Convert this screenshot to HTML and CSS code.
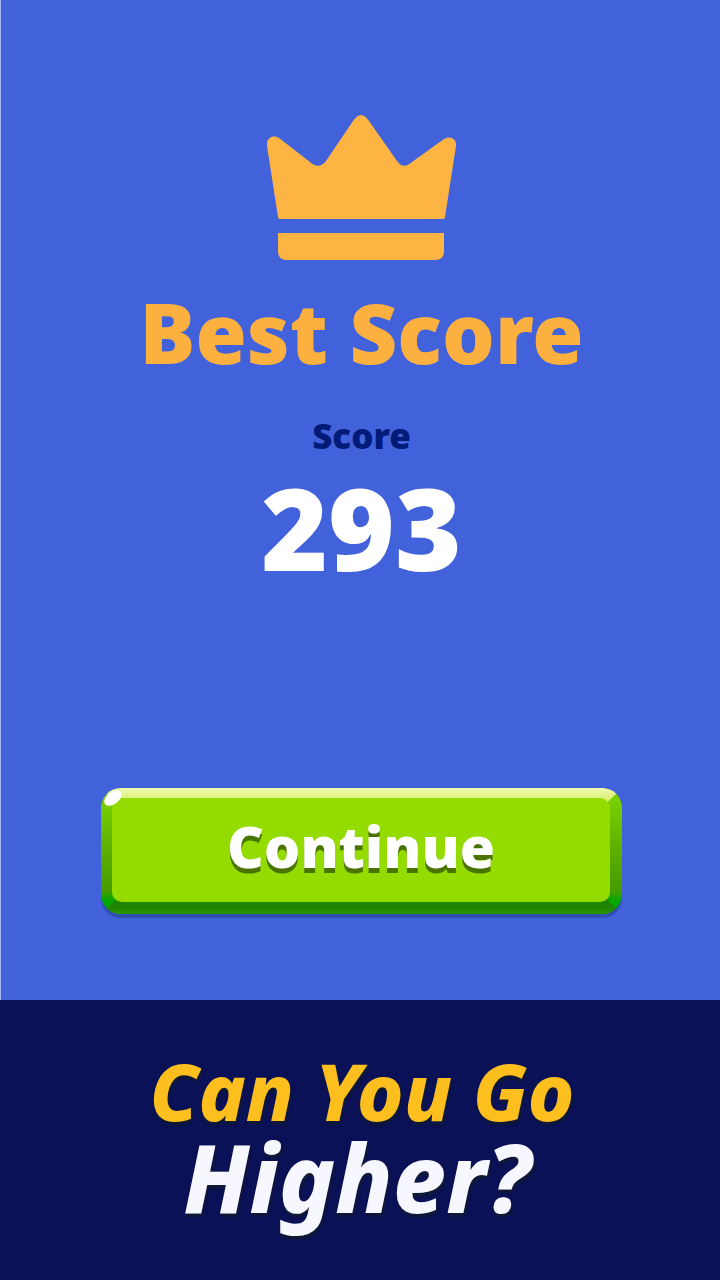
FILE: index.html
```html
<!DOCTYPE html>
<html lang="en">
<head>
<meta charset="utf-8">
<meta name="viewport" content="width=device-width, initial-scale=1">
<title>Best Score</title>
<link rel="stylesheet" href="styles.css">
</head>
<body>
<main class="result">
  <svg class="crown" viewBox="0 0 190 148" aria-hidden="true">
    <path d="M13 105 Q11 105 11 103 L0 32 C-1 24 6 20 12 24 L43 48 Q52 56 59 47 L86 7 Q94 -5 102 7 L130 47 Q136 56 145 48 L177 25 C183 21 190 25 189 32 L178 103 Q178 105 176 105 Z"/>
    <path d="M11 119 H177 V137 Q177 146 168 146 H20 Q11 146 11 137 Z"/>
  </svg>
  <h1 class="title">Best Score</h1>
  <p class="label">Score</p>
  <p class="value">293</p>
  <button class="continue" type="button">
    <span class="face">Continue</span>
    <svg class="shine" viewBox="0 0 20 18" aria-hidden="true"><ellipse cx="10" cy="9" rx="10" ry="6" transform="rotate(-38 10 9)"/></svg>
  </button>
</main>
<footer class="tagline">
  <p class="tagline-top">Can You Go</p>
  <p class="tagline-bottom">Higher?</p>
</footer>
</body>
</html>
```
FILE: styles.css
```css
* {
  box-sizing: border-box;
}

body {
  margin: 0;
  min-height: 100vh;
  display: flex;
  flex-direction: column;
  background: #0a1156;
  font-family: "Noto Sans", "Open Sans", sans-serif;
}

p,
h1 {
  margin: 0;
}

.result {
  flex: 1;
  display: flex;
  flex-direction: column;
  align-items: center;
  padding: 114px 16px 86px 18px;
  border-left: 1px solid #a9b9ee;
  background: #4262db;
}

.crown {
  width: 190px;
  height: 148px;
  fill: #fdb443;
}

.title {
  margin-top: 28px;
  font-size: 83px;
  font-weight: 900;
  line-height: 84px;
  color: #fbb040;
}

.label {
  margin-top: 44px;
  font-size: 35px;
  font-weight: 900;
  line-height: 36px;
  color: #001b78;
}

.value {
  margin-top: 14px;
  font-size: 114px;
  font-weight: 900;
  line-height: 118px;
  color: #fff;
}

.continue {
  position: relative;
  display: grid;
  width: 76%;
  height: 126px;
  margin-top: auto;
  padding: 10px 12px 12px 11px;
  border: 0;
  border-radius: 20px;
  background: linear-gradient(#79d000 10%, #5caf00 50%, #459b00 82%, #00a800 90%);
  box-shadow: 0 4px 0 #304fae;
  font-family: inherit;
  cursor: pointer;
}

.continue::before,
.continue::after {
  content: "";
  position: absolute;
  left: 0;
  right: 0;
  height: 20px;
}

.continue::before {
  top: 0;
  border-radius: 20px 20px 0 0;
  background: linear-gradient(#f0fbb0, #dcf27c 10px);
  clip-path: polygon(0 0, 100% 0, calc(100% - 20px) 100%, 20px 100%);
}

.continue::after {
  bottom: 0;
  border-radius: 0 0 20px 20px;
  background: linear-gradient(#1f8500 14px, #2a9600);
  clip-path: polygon(20px 0, calc(100% - 20px) 0, 100% 100%, 0 100%);
}

.face {
  position: relative;
  z-index: 1;
  display: grid;
  place-items: center;
  padding-bottom: 8px;
  border-radius: 10px;
  background: #94dc00;
  font-size: 57px;
  font-weight: 900;
  line-height: 64px;
  color: #fff;
  text-shadow: 0 5px 0 #4a7400;
}

.shine {
  position: absolute;
  z-index: 2;
  top: 1px;
  left: 2px;
  width: 20px;
  height: 18px;
  fill: #fff;
}

.tagline {
  padding: 48px 12px 60px 16px;
  background: #0a1156;
  text-align: center;
  font-style: italic;
  font-weight: 800;
}

.tagline-top {
  font-size: 79px;
  line-height: 86px;
  color: #fcbf1e;
  text-shadow: 1px 3px 3px #111a30;
}

.tagline-bottom {
  padding-right: 10px;
  font-size: 94px;
  line-height: 86px;
  color: #f7f8ff;
  text-shadow: 1px 3px 3px #111a30;
}
```
